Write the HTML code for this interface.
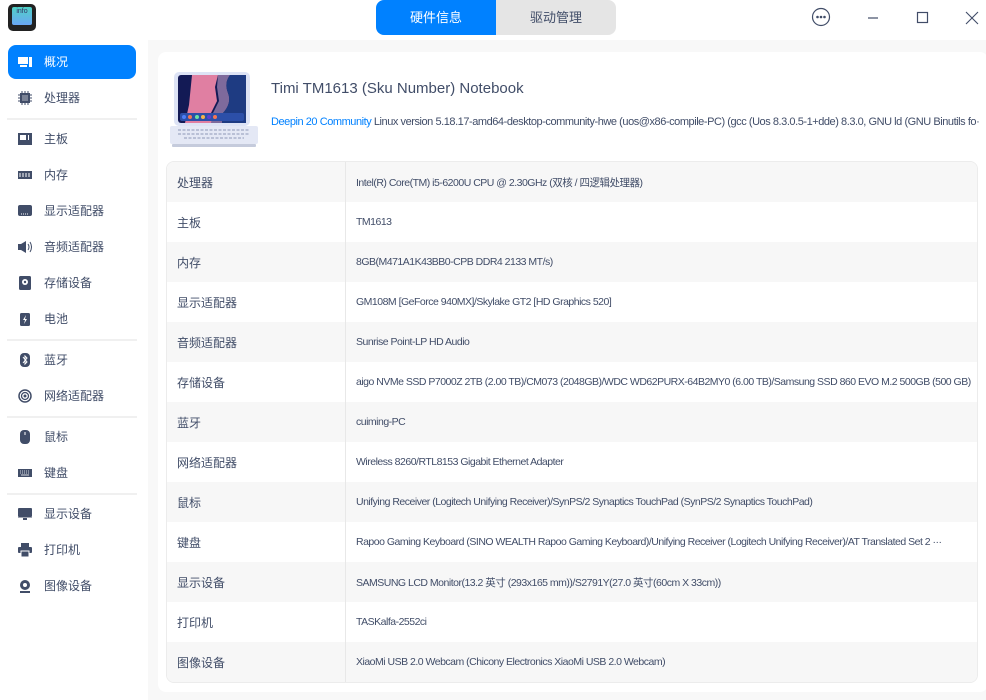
<!DOCTYPE html>
<html><head><meta charset="utf-8"><style>
*{margin:0;padding:0;box-sizing:border-box}
body{width:986px;height:700px;overflow:hidden;background:#fff;font-family:"Liberation Sans","Noto Sans CJK SC",sans-serif;color:#414d68;position:relative}
.abs{position:absolute}
.tabs{left:376px;top:0;width:240px;height:35px;border-radius:8px;overflow:hidden;display:flex;font-size:13px}
.tabs div{width:120px;text-align:center;line-height:35px}
.side{left:0;top:40px;width:148px;height:660px;background:#fff}
.item{position:absolute;left:8px;width:128px;height:34px;border-radius:8px;font-size:12px;line-height:34px;padding-left:36px;color:#414d68}
.item.sel{background:#0081ff;color:#fff}
.ic{position:absolute;left:10px;top:10px;width:14px;height:14px}
.sep{position:absolute;left:7px;width:130px;height:2px;background:#f0f0f0}
.main{left:148px;top:40px;width:838px;height:660px;background:#f8f8f8}
.card{left:158px;top:52px;width:830px;height:640px;background:#fff;border-radius:8px}
table{position:absolute;left:166px;top:161px;width:812px;border-collapse:separate;border-spacing:0;border:1px solid #ececec;border-radius:8px;overflow:hidden;font-size:10.5px;letter-spacing:-0.5px;table-layout:fixed}
td{height:40px;color:#414d68;white-space:nowrap;overflow:hidden}
td.l{width:179px;padding-left:10px;font-size:12px;letter-spacing:0;border-right:1px solid #e8e8e8}
td.v{padding-left:10px;text-overflow:ellipsis}
tr:nth-child(odd) td{background:#f7f7f7}
</style></head><body>
<div class="abs" style="left:8px;top:4px;width:28px;height:27px;border-radius:5px;background:#222;"><div style="position:absolute;left:4px;top:3px;width:20px;height:18px;background:linear-gradient(#4fd1c5,#6aa7f5);border-radius:2px;font-size:7px;color:#336;text-align:center;line-height:10px">info</div></div>
<div class="abs tabs"><div style="background:#0081ff;color:#fff">硬件信息</div><div style="background:#e5e5e5;color:#414d68">驱动管理</div></div>
<svg class="abs" style="left:811px;top:7px" width="20" height="20"><circle cx="10" cy="10" r="8.5" fill="none" stroke="#414d68" stroke-width="1.2"/><circle cx="6.5" cy="10" r="1.3" fill="#414d68"/><circle cx="10" cy="10" r="1.3" fill="#414d68"/><circle cx="13.5" cy="10" r="1.3" fill="#414d68"/></svg>
<svg class="abs" style="left:866px;top:12px" width="14" height="12"><path d="M2 6h10" stroke="#414d68" stroke-width="1.2"/></svg>
<svg class="abs" style="left:916px;top:11px" width="14" height="14"><rect x="1.5" y="1.5" width="10" height="10" fill="none" stroke="#414d68" stroke-width="1.2"/></svg>
<svg class="abs" style="left:964px;top:10px" width="16" height="16"><path d="M2 2L14 14M14 2L2 14" stroke="#414d68" stroke-width="1.1"/></svg>

<div class="abs main"></div>
<div class="abs side">
<div class="item sel" style="top:5px"><svg class="ic" viewBox="0 0 14 14"><rect x="0" y="2" width="10" height="7" fill="#fff"/><rect x="11" y="2" width="3" height="10" fill="#fff"/><rect x="2" y="10" width="7" height="2" fill="#fff"/></svg>概况</div>
<div class="item" style="top:41px"><svg class="ic" viewBox="0 0 14 14"><rect x="2" y="2" width="10" height="10" fill="#414d68"/><path d="M4 0v14M7 0v14M10 0v14M0 4h14M0 7h14M0 10h14" stroke="#414d68" stroke-width="1"/><rect x="4" y="4" width="6" height="6" fill="#fff" opacity=".3"/></svg>处理器</div>
<div class="sep" style="top:78px"></div>
<div class="item" style="top:82px"><svg class="ic" viewBox="0 0 14 14"><rect x="0" y="1" width="14" height="12" fill="#414d68"/><rect x="2" y="3" width="6" height="5" fill="#fff"/><rect x="10" y="3" width="1" height="5" fill="#fff"/></svg>主板</div>
<div class="item" style="top:118px"><svg class="ic" viewBox="0 0 14 14"><rect x="0" y="3" width="14" height="8" fill="#414d68"/><path d="M2 5v4M5 5v4M8 5v4M11 5v4" stroke="#fff"/></svg>内存</div>
<div class="item" style="top:154px"><svg class="ic" viewBox="0 0 14 14"><rect x="0" y="1" width="14" height="11" rx="2" fill="#414d68"/><path d="M3 10h8" stroke="#fff" stroke-dasharray="1 1"/></svg>显示适配器</div>
<div class="item" style="top:190px"><svg class="ic" viewBox="0 0 14 14"><path d="M0 4h3l5-3v12l-5-3H0z" fill="#414d68"/><path d="M10 4q2 3 0 6M12 2q3 5 0 10" fill="none" stroke="#414d68"/></svg>音频适配器</div>
<div class="item" style="top:226px"><svg class="ic" viewBox="0 0 14 14"><rect x="1" y="0" width="12" height="14" rx="1.5" fill="#414d68"/><circle cx="7" cy="6" r="3" fill="#fff"/><circle cx="7" cy="6" r="1.2" fill="#414d68"/></svg>存储设备</div>
<div class="item" style="top:262px"><svg class="ic" viewBox="0 0 14 14"><rect x="2" y="1" width="10" height="13" rx="1.5" fill="#414d68"/><path d="M8 3L5 8h2l-1 4 3-5H7z" fill="#fff"/></svg>电池</div>
<div class="sep" style="top:299px"></div>
<div class="item" style="top:303px"><svg class="ic" viewBox="0 0 14 14"><rect x="2" y="0" width="10" height="14" rx="4" fill="#414d68"/><path d="M5 4l4 5-2 2V3l2 2-4 5" fill="none" stroke="#fff"/></svg>蓝牙</div>
<div class="item" style="top:339px"><svg class="ic" viewBox="0 0 14 14"><circle cx="7" cy="7" r="6" fill="none" stroke="#414d68" stroke-width="1.5"/><circle cx="7" cy="7" r="3.5" fill="none" stroke="#414d68" stroke-width="1.3"/><circle cx="7" cy="7" r="1.5" fill="#414d68"/></svg>网络适配器</div>
<div class="sep" style="top:376px"></div>
<div class="item" style="top:380px"><svg class="ic" viewBox="0 0 14 14"><rect x="2" y="0" width="10" height="14" rx="4" fill="#414d68"/><rect x="6.5" y="2" width="1" height="3" fill="#fff"/></svg>鼠标</div>
<div class="item" style="top:416px"><svg class="ic" viewBox="0 0 14 14"><rect x="0" y="3" width="14" height="8" fill="#414d68"/><path d="M2 5h10M2 7h10" stroke="#fff" stroke-width=".8" stroke-dasharray="1 1"/><path d="M3 9h8" stroke="#fff" stroke-width=".8"/></svg>键盘</div>
<div class="sep" style="top:453px"></div>
<div class="item" style="top:457px"><svg class="ic" viewBox="0 0 14 14"><rect x="0" y="1" width="14" height="9" rx="1" fill="#414d68"/><rect x="0" y="10" width="14" height="1" fill="#414d68" opacity=".5"/><rect x="5" y="11" width="4" height="2" fill="#414d68"/></svg>显示设备</div>
<div class="item" style="top:493px"><svg class="ic" viewBox="0 0 14 14"><rect x="3" y="0" width="8" height="4" fill="#414d68"/><rect x="0" y="4" width="14" height="6" rx="1" fill="#414d68"/><rect x="3" y="8" width="8" height="6" fill="#414d68" stroke="#fff"/></svg>打印机</div>
<div class="item" style="top:529px"><svg class="ic" viewBox="0 0 14 14"><circle cx="7" cy="6" r="5" fill="#414d68"/><circle cx="7" cy="6" r="2" fill="#fff"/><rect x="2" y="12" width="10" height="2" fill="#414d68"/></svg>图像设备</div>
</div>

<div class="abs card"></div>
<svg class="abs" style="left:170px;top:72px" width="90" height="78" viewBox="0 0 90 78">
<rect x="4" y="0" width="76" height="54" rx="5" fill="#dde3f5"/>
<rect x="8" y="3" width="68" height="48" rx="3" fill="#131a55"/>
<path d="M22 3h26l-3 12 2 14-6 12 2 10H15l4-18z" fill="#e07fa2"/>
<path d="M48 3h12q-6 8-2 18t-5 20l-1 10H41l2-10 6-12-2-14z" fill="#7e6a9c"/>
<path d="M60 3h16v48H52l1-10q9-10 5-20t2-18z" fill="#1e3b82"/>
<rect x="10" y="41" width="64" height="8" rx="2" fill="#2c4fa8"/>
<circle cx="14" cy="45" r="2" fill="#4d7ef7"/><circle cx="20" cy="45" r="2" fill="#f47652"/><circle cx="27" cy="45" r="2" fill="#6be3a2"/><circle cx="33" cy="45" r="2" fill="#f5b34b"/><circle cx="39" cy="45" r="2" fill="#5e3fd0"/><circle cx="45" cy="45" r="2" fill="#f47652"/>
<rect x="0" y="54" width="88" height="18" rx="2" fill="#e4e8f5"/>
<path d="M8 58h72M8 62h72M14 66h60" stroke="#b9c0d6" stroke-width="2" stroke-dasharray="3 1.5"/>
<rect x="2" y="72" width="84" height="3" rx="1" fill="#c5cbdc"/>
</svg>
<div class="abs" style="left:271px;top:80px;font-size:15px;color:#414d68">Timi TM1613 (Sku Number) Notebook</div>
<div class="abs" style="left:271px;top:116px;font-size:11px;letter-spacing:-0.45px;color:#414d68;white-space:nowrap;width:708px;overflow:hidden"><span style="color:#0081ff">Deepin 20 Community</span> Linux version 5.18.17-amd64-desktop-community-hwe (uos@x86-compile-PC) (gcc (Uos 8.3.0.5-1+dde) 8.3.0, GNU ld (GNU Binutils fo···</div>

<table>
<tr><td class="l">处理器</td><td class="v">Intel(R) Core(TM) i5-6200U CPU @ 2.30GHz (双核 / 四逻辑处理器)</td></tr>
<tr><td class="l">主板</td><td class="v">TM1613</td></tr>
<tr><td class="l">内存</td><td class="v">8GB(M471A1K43BB0-CPB DDR4 2133 MT/s)</td></tr>
<tr><td class="l">显示适配器</td><td class="v">GM108M [GeForce 940MX]/Skylake GT2 [HD Graphics 520]</td></tr>
<tr><td class="l">音频适配器</td><td class="v">Sunrise Point-LP HD Audio</td></tr>
<tr><td class="l">存储设备</td><td class="v">aigo NVMe SSD P7000Z 2TB (2.00 TB)/CM073 (2048GB)/WDC WD62PURX-64B2MY0 (6.00 TB)/Samsung SSD 860 EVO M.2 500GB (500 GB)</td></tr>
<tr><td class="l">蓝牙</td><td class="v">cuiming-PC</td></tr>
<tr><td class="l">网络适配器</td><td class="v">Wireless 8260/RTL8153 Gigabit Ethernet Adapter</td></tr>
<tr><td class="l">鼠标</td><td class="v">Unifying Receiver (Logitech Unifying Receiver)/SynPS/2 Synaptics TouchPad (SynPS/2 Synaptics TouchPad)</td></tr>
<tr><td class="l">键盘</td><td class="v">Rapoo Gaming Keyboard (SINO WEALTH Rapoo Gaming Keyboard)/Unifying Receiver (Logitech Unifying Receiver)/AT Translated Set 2 ···</td></tr>
<tr><td class="l">显示设备</td><td class="v">SAMSUNG LCD Monitor(13.2 英寸 (293x165 mm))/S2791Y(27.0 英寸(60cm X 33cm))</td></tr>
<tr><td class="l">打印机</td><td class="v">TASKalfa-2552ci</td></tr>
<tr><td class="l">图像设备</td><td class="v">XiaoMi USB 2.0 Webcam (Chicony Electronics XiaoMi USB 2.0 Webcam)</td></tr>
</table>
</body></html>
